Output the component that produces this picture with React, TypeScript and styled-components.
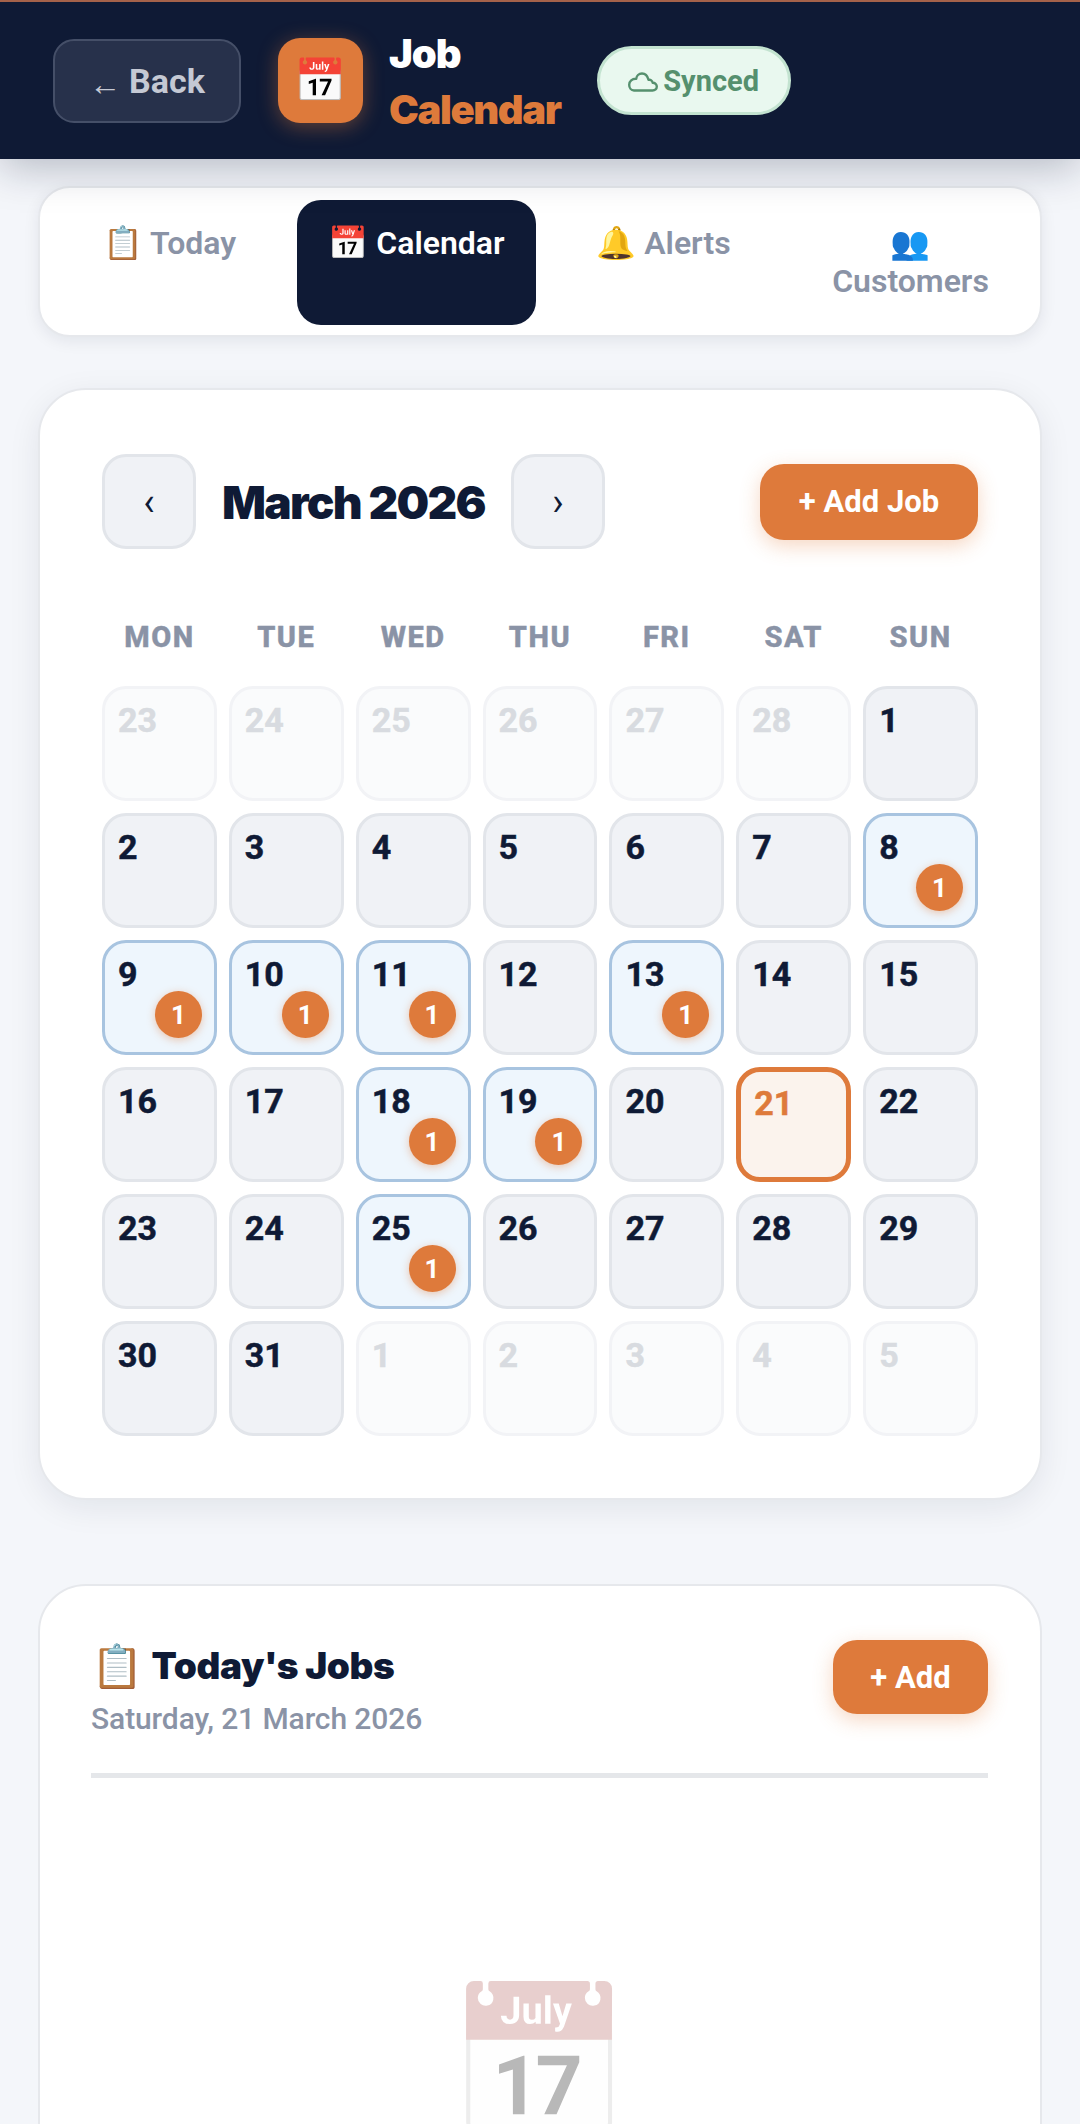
import styled, { createGlobalStyle } from "styled-components"

const GlobalStyle = createGlobalStyle`
  html, body {
    margin: 0;
    padding: 0;
    background: #f4f6fa;
  }
  * {
    box-sizing: border-box;
  }
  body {
    font-family: Roboto, "Noto Sans", "Noto Color Emoji", sans-serif;
  }
`

type Day = { n: number; kind?: "muted" | "job" | "today" }

const days: Day[] = [
  ...[23, 24, 25, 26, 27, 28].map((n) => ({ n, kind: "muted" as const })),
  { n: 1 },
  ...[2, 3, 4, 5, 6, 7].map((n) => ({ n })),
  { n: 8, kind: "job" },
  { n: 9, kind: "job" },
  { n: 10, kind: "job" },
  { n: 11, kind: "job" },
  { n: 12 },
  { n: 13, kind: "job" },
  { n: 14 },
  { n: 15 },
  { n: 16 },
  { n: 17 },
  { n: 18, kind: "job" },
  { n: 19, kind: "job" },
  { n: 20 },
  { n: 21, kind: "today" },
  { n: 22 },
  { n: 23 },
  { n: 24 },
  { n: 25, kind: "job" },
  ...[26, 27, 28, 29, 30, 31].map((n) => ({ n })),
  ...[1, 2, 3, 4, 5].map((n) => ({ n, kind: "muted" as const })),
]

const weekdays = ["MON", "TUE", "WED", "THU", "FRI", "SAT", "SUN"]

const App = () => {
  return (
    <Page>
      <GlobalStyle />
      <Header>
        <BackButton><span>←</span> Back</BackButton>
        <Logo>📅</Logo>
        <Brand>
          <BrandTop>Job</BrandTop>
          <BrandBottom>Calendar</BrandBottom>
        </Brand>
        <SyncPill>
          <svg width="30" height="20" viewBox="0 0 30 20" fill="none" stroke="currentColor" strokeWidth="2.4" strokeLinejoin="round">
            <path d="M6 18.5h18.5c2.6 0 4.3-1.7 4.3-3.9 0-2.2-1.8-3.9-4.1-3.8-.3-2.1-2.1-3.4-4.2-3C19.6 4.300 17.300 1.500 14 1.500c-3.200 0-5.500 2.300-5.800 5.300C4.200 6.600 1.200 9.300 1.200 12.700c0 3.200 2 5.800 4.800 5.800Z" />
          </svg>
          Synced
        </SyncPill>
      </Header>

      <Main>
        <Tabs>
          <Tab>📋 Today</Tab>
          <Tab $active>📅 Calendar</Tab>
          <Tab>🔔 Alerts</Tab>
          <Tab>👥 Customers</Tab>
        </Tabs>

        <CalendarCard>
          <CalendarTop>
            <NavButton>‹</NavButton>
            <MonthTitle>March 2026</MonthTitle>
            <NavButton>›</NavButton>
            <AddJob>+ Add Job</AddJob>
          </CalendarTop>
          <WeekRow>
            {weekdays.map((d) => (
              <WeekDay key={d}>{d}</WeekDay>
            ))}
          </WeekRow>
          <DayGrid>
            {days.map((d, i) => (
              <Cell key={i} $kind={d.kind}>
                {d.n}
                {d.kind === "job" && <Badge>1</Badge>}
              </Cell>
            ))}
          </DayGrid>
        </CalendarCard>

        <JobsCard>
          <JobsHead>
            <div>
              <JobsTitle><TitleEmoji>📋</TitleEmoji>Today's Jobs</JobsTitle>
              <JobsDate>Saturday, 21 March 2026</JobsDate>
            </div>
            <AddSmall>+ Add</AddSmall>
          </JobsHead>
          <Divider />
          <EmptyIcon>📅</EmptyIcon>
        </JobsCard>
      </Main>
    </Page>
  )
}

export default App

const Page = styled.div`
  width: 1080px;
  height: 2124px;
  overflow: hidden;
  background: #f4f6fa;
`

const Header = styled.header`
  height: 159px;
  background: #0f1a35;
  border-top: 2px solid #a5624a;
  box-shadow: 0 8px 40px rgba(15, 26, 53, 0.28);
  display: flex;
  align-items: center;
  padding: 0 53px;
  position: relative;
`

const BackButton = styled.div`
  width: 188px;
  height: 84px;
  border-radius: 21px;
  background: #27314b;
  border: 2px solid #454f68;
  color: #c5c9d4;
  font-size: 34px;
  font-weight: 700;
  display: flex;
  align-items: center;
  justify-content: center;
  gap: 8px;
  span {
    font-weight: 400;
    font-size: 32px;
    margin-top: 6px;
  }
`

const Logo = styled.div`
  width: 85px;
  height: 85px;
  margin-left: 37px;
  border-radius: 22px;
  background: #de7a3b;
  box-shadow: 0 4px 20px rgba(224, 123, 57, 0.4);
  display: flex;
  align-items: center;
  justify-content: center;
  font-size: 42px;
`

const Brand = styled.div`
  margin: 2px 0 0 26px;
  display: flex;
  flex-direction: column;
  font-family: Inter, Roboto, sans-serif;
  font-weight: 900;
  font-size: 40px;
  line-height: 56px;
  letter-spacing: -1px;
`

const BrandTop = styled.span`
  color: #ffffff;
`

const BrandBottom = styled.span`
  color: #de7a3b;
  letter-spacing: -1.4px;
`

const SyncPill = styled.div`
  margin-left: 36px;
  width: 194px;
  height: 69px;
  border-radius: 35px;
  background: #e9f8ef;
  border: 3px solid #c3e3d0;
  color: #55906e;
  font-size: 29px;
  font-weight: 700;
  display: flex;
  align-items: center;
  justify-content: center;
  gap: 5px;
  svg {
    margin-top: 2px;
  }
`

const Main = styled.main`
  padding: 27px 38px 0;
`

const Tabs = styled.nav`
  height: 151px;
  padding: 12px 10px 10px;
  background: #ffffff;
  border: 2px solid #e6e8ec;
  border-radius: 32px;
  box-shadow: 0 4px 16px rgba(15, 26, 53, 0.08);
  display: grid;
  grid-template-columns: repeat(4, 1fr);
  gap: 8px;
`

const Tab = styled.div<{ $active?: boolean }>`
  padding: 24px 22px;
  border-radius: 24px;
  text-align: center;
  font-size: 32px;
  font-weight: 600;
  line-height: 38px;
  color: ${(p) => (p.$active ? "#ffffff" : "#8a93a6")};
  background: ${(p) => (p.$active ? "#0f1a35" : "transparent")};
`

const CalendarCard = styled.section`
  margin-top: 51px;
  height: 1112px;
  padding: 64px 62px;
  background: #ffffff;
  border: 2px solid #e6e8ec;
  border-radius: 48px;
  box-shadow: 0 8px 32px rgba(15, 26, 53, 0.08);
`

const CalendarTop = styled.div`
  display: flex;
  align-items: center;
`

const NavButton = styled.div`
  width: 94px;
  height: 95px;
  border-radius: 24px;
  background: #f0f2f6;
  border: 3px solid #e2e5ea;
  color: #0f1a35;
  font-size: 38px;
  display: flex;
  align-items: center;
  justify-content: center;
`

const MonthTitle = styled.h2`
  margin: 0 26px;
  width: 263px;
  white-space: nowrap;
  font-family: Inter, Roboto, sans-serif;
  font-size: 46px;
  font-weight: 900;
  color: #0f1a35;
  letter-spacing: -1.7px;
`

const AddJob = styled.div`
  margin-left: auto;
  width: 218px;
  height: 76px;
  border-radius: 24px;
  background: #de7a3b;
  box-shadow: 0 6px 20px rgba(224, 123, 57, 0.3);
  color: #ffffff;
  font-size: 31px;
  font-weight: 700;
  display: flex;
  align-items: center;
  justify-content: center;
`

const WeekRow = styled.div`
  margin-top: 70px;
  display: grid;
  grid-template-columns: repeat(7, 1fr);
  gap: 12px;
`

const WeekDay = styled.div`
  text-align: center;
  color: #8a93a6;
  font-size: 29px;
  font-weight: 800;
  letter-spacing: 1.5px;
  line-height: 36px;
  -webkit-text-stroke: 0.4px currentColor;
`

const DayGrid = styled.div`
  margin-top: 31px;
  display: grid;
  grid-template-columns: repeat(7, 1fr);
  grid-auto-rows: 115px;
  gap: 12px 12px;
`

const kindStyles = {
  muted: "background:#fafbfc;border:3px solid #f2f3f6;color:#d8dbe0;",
  job: "background:#eef6fd;border:3px solid #a8c4e0;color:#0f1a35;",
  today: "background:#fbf3ed;border:5px solid #de7a3b;color:#de7a3b;",
}

const Cell = styled.div<{ $kind?: "muted" | "job" | "today" }>`
  position: relative;
  border-radius: 24px;
  padding: 11px 13px;
  font-size: 34px;
  font-weight: 700;
  line-height: 40px;
  background: #f0f2f6;
  border: 3px solid #e2e5ea;
  color: #0f1a35;
  -webkit-text-stroke: 0.5px currentColor;
  ${(p) => (p.$kind ? kindStyles[p.$kind] : "")}
`

const Badge = styled.span`
  position: absolute;
  right: 12px;
  bottom: 14px;
  width: 47px;
  height: 47px;
  border-radius: 50%;
  background: #de7a3b;
  box-shadow: 0 2px 8px rgba(224, 123, 57, 0.4);
  color: #fff;
  font-size: 26px;
  font-weight: 700;
  -webkit-text-stroke: 0;
  display: flex;
  align-items: center;
  justify-content: center;
`

const JobsCard = styled.section`
  margin-top: 84px;
  height: 700px;
  padding: 54px 52px 0 51px;
  background: #ffffff;
  border: 2px solid #e6e8ec;
  border-radius: 48px;
`

const JobsHead = styled.div`
  display: flex;
  justify-content: space-between;
  align-items: flex-start;
`

const JobsTitle = styled.h3`
  margin: 1px 0 0;
  font-family: Inter, Roboto, sans-serif;
  font-size: 37px;
  font-weight: 900;
  color: #0f1a35;
  line-height: 50px;
  letter-spacing: -0.4px;
  display: flex;
  align-items: center;
`

const TitleEmoji = styled.span`
  font-size: 42px;
  margin-right: 9px;
`

const JobsDate = styled.div`
  margin-top: 10px;
  font-size: 30px;
  font-weight: 500;
  color: #8a93a6;
  letter-spacing: -0.1px;
`

const AddSmall = styled.div`
  width: 155px;
  height: 74px;
  border-radius: 24px;
  background: #de7a3b;
  box-shadow: 0 6px 20px rgba(224, 123, 57, 0.3);
  color: #ffffff;
  font-size: 31px;
  font-weight: 700;
  display: flex;
  align-items: center;
  justify-content: center;
`

const Divider = styled.div`
  margin-top: 37px;
  height: 5px;
  background: #e5e7ea;
`

const EmptyIcon = styled.div`
  margin-top: 196px;
  text-align: center;
  font-size: 148px;
  line-height: 1.2;
  filter: grayscale(0.5) opacity(0.28);
`
